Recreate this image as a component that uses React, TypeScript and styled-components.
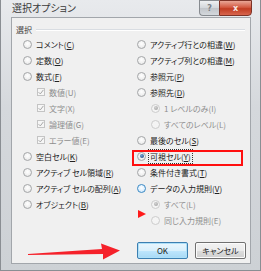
import React from "react";
import styled, { createGlobalStyle, css } from "styled-components";

const GlobalStyle = createGlobalStyle`
  html, body {
    margin: 0;
    padding: 0;
    background: #ffffff;
  }
  body {
    font-family: "Noto Sans CJK JP", "Noto Sans", sans-serif;
    font-feature-settings: "palt" 1;
  }
`;

const Window = styled.div`
  position: relative;
  width: 261px;
  height: 271px;
  box-sizing: border-box;
  display: flex;
  flex-direction: column;
  background: linear-gradient(180deg, #e8eaed 0%, #d5d8dc 40%, #cdd1d5 100%);
  border: 1px solid #8a8e93;
  border-top: none;
  overflow: hidden;
`;

const TitleBar = styled.div`
  height: 17px;
  display: flex;
  align-items: flex-start;
  padding-left: 11px;
  flex-shrink: 0;
`;

const Title = styled.span`
  font-size: 10px;
  line-height: 15px;
  color: #3a3a3a;
`;

const CaptionButtons = styled.div`
  margin-left: auto;
  margin-right: 8px;
  display: flex;
`;

const CaptionButton = styled.div<{ $close?: boolean }>`
  height: 16px;
  box-sizing: border-box;
  display: flex;
  align-items: center;
  justify-content: center;
  font-family: "DejaVu Sans", sans-serif;
  font-weight: bold;
  font-size: 8px;
  ${(p) =>
    p.$close
      ? css`
          width: 33px;
          background: linear-gradient(180deg, #e9a696 0%, #d35a42 45%, #c13c22 55%, #d7664e 100%);
          border: 1px solid #7d3327;
          border-radius: 0 0 4px 0;
          color: #f6e7e3;
        `
      : css`
          width: 20px;
          background: linear-gradient(180deg, #eef0f2 0%, #d2d6da 50%, #c1c5ca 52%, #d4d8dc 100%);
          border: 1px solid #878b90;
          border-right: none;
          border-radius: 0 0 0 4px;
          color: #7a7f85;
        `}
`;

const Client = styled.div`
  flex: 1;
  margin: 0 9px 6px 10px;
  border: 1px solid #a2a6ab;
  background: #f0f0f0;
  display: flex;
  flex-direction: column;
`;

const GroupHeader = styled.div`
  height: 11px;
  margin-top: 6px;
  padding-left: 4px;
  padding-right: 5px;
  display: flex;
  align-items: center;
  gap: 4px;
`;

const GroupLabel = styled.span`
  font-size: 8px;
  line-height: 11px;
  color: #444444;
`;

const GroupLine = styled.div`
  flex: 1;
  height: 1px;
  background: #d9dde2;
  border-bottom: 1px solid #ffffff;
`;

const Columns = styled.div`
  margin-top: 1px;
  padding-left: 11px;
  display: grid;
  grid-template-columns: 114px 1fr;
`;

const Column = styled.div`
  display: flex;
  flex-direction: column;
`;

const OptionRow = styled.div<{ $indent?: boolean }>`
  height: 16px;
  display: flex;
  align-items: center;
  gap: 4px;
  padding-left: ${(p) => (p.$indent ? 14 : 0)}px;
`;

const Radio = styled.span<{ $checked?: boolean; $disabled?: boolean; $hover?: boolean }>`
  width: 9px;
  height: 9px;
  box-sizing: border-box;
  border-radius: 50%;
  flex-shrink: 0;
  display: flex;
  align-items: center;
  justify-content: center;
  border: 1px solid ${(p) => (p.$hover ? "#3c8ac4" : p.$disabled ? "#cccccc" : "#a4a6a8")};
  background: ${(p) =>
    p.$hover
      ? "radial-gradient(circle at 50% 40%, #ffffff 0%, #dcefff 60%, #b9dcf4 100%)"
      : p.$disabled
      ? "#f4f4f4"
      : "radial-gradient(circle at 50% 40%, #ffffff 0%, #efefef 60%, #dcdcdc 100%)"};

  &::after {
    content: "";
    display: ${(p) => (p.$checked ? "block" : "none")};
    width: 4px;
    height: 4px;
    border-radius: 50%;
    background: ${(p) =>
      p.$disabled
        ? "radial-gradient(circle at 40% 35%, #d2d2d2, #9c9c9c)"
        : "radial-gradient(circle at 40% 35%, #6fa0d2, #1b3f73)"};
  }
`;

const CheckBox = styled.span`
  width: 8px;
  height: 8px;
  box-sizing: border-box;
  border: 1px solid #c4c4c4;
  background: #f6f6f6;
  flex-shrink: 0;
  display: flex;
  align-items: center;
  justify-content: center;
`;

const Label = styled.span<{ $disabled?: boolean; $focus?: boolean }>`
  font-size: 8px;
  line-height: 11px;
  white-space: nowrap;
  color: ${(p) => (p.$disabled ? "#8e8e8e" : "#222222")};
  outline: ${(p) => (p.$focus ? "1px dotted #333333" : "none")};
  outline-offset: 1px;

  u {
    text-decoration: ${(p) => (p.$disabled ? "none" : "underline")};
    text-underline-offset: 1px;
  }
`;

const ButtonRow = styled.div`
  margin-top: auto;
  margin-bottom: 4px;
  padding-right: 4px;
  display: flex;
  justify-content: flex-end;
  gap: 7px;
`;

const DialogButton = styled.button<{ $default?: boolean }>`
  width: 51px;
  height: 17px;
  padding: 0;
  box-sizing: border-box;
  font-family: "Noto Sans CJK JP", "Noto Sans", sans-serif;
  font-feature-settings: "palt" 1;
  font-size: 8px;
  color: #1a1a1a;
  border-radius: 2px;
  border: 1px solid ${(p) => (p.$default ? "#3c7fb1" : "#707070")};
  background: ${(p) =>
    p.$default
      ? "linear-gradient(180deg, #eaf6fd 0%, #d9f0fc 50%, #bee6fd 52%, #a7d9f5 100%)"
      : "linear-gradient(180deg, #f2f2f2 0%, #ebebeb 50%, #dddddd 52%, #cfcfcf 100%)"};
  box-shadow: inset 0 0 0 1px ${(p) => (p.$default ? "#aee0f8" : "#fbfbfb")};
`;

const Highlight = styled.div`
  position: absolute;
  left: 131px;
  top: 150px;
  width: 111px;
  height: 16px;
  box-sizing: border-box;
  border: 2px solid #ff0f0f;
  pointer-events: none;
`;

const Annotation = styled.svg`
  position: absolute;
  pointer-events: none;
`;

type Option = {
  text: string;
  key: string;
  kind?: "radio" | "check";
  indent?: boolean;
  disabled?: boolean;
  checked?: boolean;
  focus?: boolean;
  hover?: boolean;
};

const leftOptions: Option[] = [
  { text: "コメント", key: "C" },
  { text: "定数", key: "O" },
  { text: "数式", key: "F" },
  { text: "数値", key: "U", kind: "check", indent: true, disabled: true, checked: true },
  { text: "文字", key: "X", kind: "check", indent: true, disabled: true, checked: true },
  { text: "論理値", key: "G", kind: "check", indent: true, disabled: true, checked: true },
  { text: "エラー値", key: "E", kind: "check", indent: true, disabled: true, checked: true },
  { text: "空白セル", key: "K" },
  { text: "アクティブ セル領域", key: "R" },
  { text: "アクティブ セルの配列", key: "A" },
  { text: "オブジェクト", key: "B" },
];

const rightOptions: Option[] = [
  { text: "アクティブ行との相違", key: "W" },
  { text: "アクティブ列との相違", key: "M" },
  { text: "参照元", key: "P" },
  { text: "参照先", key: "D" },
  { text: "1 レベルのみ", key: "I", indent: true, disabled: true, checked: true },
  { text: "すべてのレベル", key: "L", indent: true, disabled: true },
  { text: "最後のセル", key: "S" },
  { text: "可視セル", key: "Y", checked: true, focus: true },
  { text: "条件付き書式", key: "T" },
  { text: "データの入力規則", key: "V", hover: true },
  { text: "すべて", key: "L", indent: true, disabled: true, checked: true },
  { text: "同じ入力規則", key: "E", indent: true, disabled: true },
];

const CheckMark = () => (
  <svg width="6" height="6" viewBox="0 0 6 6">
    <path d="M0.6 3.2 L2.3 4.9 L5.4 0.9" fill="none" stroke="#a6a6a6" strokeWidth="1" />
  </svg>
);

const OptionItem: React.FC<{ option: Option }> = ({ option }) => (
  <OptionRow $indent={option.indent}>
    {option.kind === "check" ? (
      <CheckBox>{option.checked && <CheckMark />}</CheckBox>
    ) : (
      <Radio $checked={option.checked} $disabled={option.disabled} $hover={option.hover} />
    )}
    <Label $disabled={option.disabled} $focus={option.focus}>
      {option.text}(<u>{option.key}</u>)
    </Label>
  </OptionRow>
);

export default function App() {
  return (
    <>
      <GlobalStyle />
      <Window>
        <TitleBar>
          <Title>選択オプション</Title>
          <CaptionButtons>
            <CaptionButton>?</CaptionButton>
            <CaptionButton $close>x</CaptionButton>
          </CaptionButtons>
        </TitleBar>
        <Client>
          <GroupHeader>
            <GroupLabel>選択</GroupLabel>
            <GroupLine />
          </GroupHeader>
          <Columns>
            <Column>
              {leftOptions.map((o) => (
                <OptionItem key={o.text} option={o} />
              ))}
            </Column>
            <Column>
              {rightOptions.map((o) => (
                <OptionItem key={o.text} option={o} />
              ))}
            </Column>
          </Columns>
          <ButtonRow>
            <DialogButton $default>OK</DialogButton>
            <DialogButton>キャンセル</DialogButton>
          </ButtonRow>
        </Client>

        <Highlight />
        <Annotation style={{ left: 136, top: 209 }} width="10" height="10" viewBox="0 0 10 10">
          <polygon points="1,1 9,5 1,9" fill="#ff1a1a" />
        </Annotation>
        <Annotation style={{ left: 25, top: 242 }} width="96" height="20" viewBox="0 0 96 20">
          <polygon points="2,12 76,7 75,1.5 94,8.5 77,17.5 77,12 2,13" fill="#f5212a" />
        </Annotation>
      </Window>
    </>
  );
}
